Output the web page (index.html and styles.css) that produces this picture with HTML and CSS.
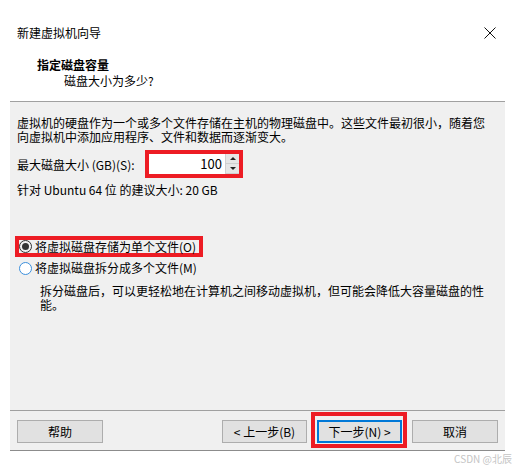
FILE: index.html
```html
<!DOCTYPE html>
<html>

<head>
  <meta charset="utf-8">
  <title>新建虚拟机向导</title>
  <link rel="stylesheet" href="styles.css">
</head>

<body>
  <div class="wizard">
    <div class="titlebar">
      <span class="title">新建虚拟机向导</span>
      <svg class="close" width="12" height="12" viewBox="0 0 12 12">
        <path d="M0.5 0.5 L11.5 11.5 M11.5 0.5 L0.5 11.5" stroke="#111" stroke-width="1" fill="none"/>
      </svg>
    </div>

    <div class="header">
      <div class="heading">指定磁盘容量</div>
      <div class="subheading">磁盘大小为多少?</div>
    </div>

    <div class="panel">
      <div class="content">
        <p class="intro">虚拟机的硬盘作为一个或多个文件存储在主机的物理磁盘中。这些文件最初很小，随着您<br>向虚拟机中添加应用程序、文件和数据而逐渐变大。</p>

        <div class="size-row">
          <span class="size-label">最大磁盘大小 (GB)(S):</span>
          <div class="size-box">
            <div class="size-input">100</div>
            <div class="spinner">
              <span class="spin-btn"><span class="arrow-up"></span></span>
              <span class="spin-btn"><span class="arrow-down"></span></span>
            </div>
          </div>
        </div>

        <p class="hint">针对 Ubuntu 64 位 的建议大小: 20 GB</p>

        <div class="options">
          <div class="option-mark">
            <label class="option"><span class="radio checked"></span>将虚拟磁盘存储为单个文件(O)</label>
          </div>
          <label class="option second"><span class="radio"></span>将虚拟磁盘拆分成多个文件(M)</label>
          <p class="option-note">拆分磁盘后，可以更轻松地在计算机之间移动虚拟机，但可能会降低大容量磁盘的性<br>能。</p>
        </div>
      </div>

      <div class="buttons">
        <button class="btn btn-help">帮助</button>
        <div class="spacer"></div>
        <button class="btn btn-prev">&lt; 上一步(B)</button>
        <button class="btn btn-next">下一步(N) &gt;</button>
        <button class="btn btn-cancel">取消</button>
      </div>
    </div>

    <div class="watermark">CSDN @北辰</div>
  </div>
</body>

</html>
```

FILE: styles.css
```css
* {
  box-sizing: border-box;
  margin: 0;
  padding: 0;
}

body {
  font-family: "Noto Sans CJK SC", "Noto Sans", sans-serif;
  font-size: 12px;
  color: #000000;
  background-color: #ffffff;
}

.wizard {
  width: 517px;
  height: 468px;
  background-color: #ffffff;
}

/* title bar */
.titlebar {
  height: 50px;
  display: flex;
  justify-content: space-between;
  align-items: flex-start;
  padding: 25px 21px 0 17px;
}

.title {
  line-height: 16px;
}

.close {
  margin-top: 2px;
}

/* header */
.header {
  height: 51px;
  padding: 7px 0 0 37px;
}

.heading {
  font-weight: 700;
  line-height: 16px;
}

.subheading {
  line-height: 16px;
  padding-left: 27px;
}

/* main panel */
.panel {
  margin-left: 10px;
  width: 495px;
  background-color: #f0f0f0;
  border-top: 1px solid #a0a0a0;
}

.content {
  height: 308px;
  padding: 14px 7px 0 7px;
}

.intro {
  line-height: 14px;
}

.size-row {
  display: flex;
  align-items: center;
  margin-top: 6px;
  height: 28px;
}

.size-label {
  width: 128px;
}

.size-box {
  display: flex;
  width: 98px;
  height: 28px;
  border: 4px solid #ed1c24;
}

.size-input {
  width: 76px;
  background-color: #ffffff;
  text-align: right;
  padding-right: 3px;
  line-height: 20px;
  font-size: 13px;
}

.spinner {
  width: 14px;
  display: flex;
  flex-direction: column;
  background-color: #f0f0f0;
  border-left: 1px solid #d0d0d0;
}

.spin-btn {
  flex: 1;
  display: flex;
  align-items: center;
  justify-content: center;
  background-color: #e6e6e6;
  border-bottom: 1px solid #cfcfcf;
}

.arrow-up {
  width: 0;
  height: 0;
  border-left: 3px solid transparent;
  border-right: 3px solid transparent;
  border-bottom: 3px solid #222222;
}

.arrow-down {
  width: 0;
  height: 0;
  border-left: 3px solid transparent;
  border-right: 3px solid transparent;
  border-top: 3px solid #222222;
}

.hint {
  margin-top: 5px;
  line-height: 14px;
}

/* radio options */
.options {
  margin-top: 39px;
}

.option-mark {
  display: inline-block;
  margin-left: -2px;
  height: 21px;
  border: 4px solid #ed1c24;
  padding-right: 3px;
}

.option {
  display: flex;
  align-items: center;
  line-height: 13px;
}

.option.second {
  margin-top: 3px;
  margin-left: 2px;
  line-height: 16px;
}

.radio {
  width: 13px;
  height: 13px;
  border-radius: 50%;
  border: 1px solid #3b8fdc;
  background-color: #ffffff;
  margin-right: 3px;
  display: flex;
  align-items: center;
  justify-content: center;
}

.radio.checked {
  border-color: #333333;
  background-color: #f0f0f0;
}

.radio.checked::after {
  content: "";
  width: 7px;
  height: 7px;
  border-radius: 50%;
  background-color: #333333;
}

.option-note {
  margin: 8px 0 0 23px;
  line-height: 14px;
}

/* button row */
.buttons {
  display: flex;
  align-items: flex-start;
  height: 41px;
  padding: 9px 7px 0 7px;
  border-top: 1px solid #a0a0a0;
  border-bottom: 1px solid #8c8c8c;
}

.spacer {
  flex: 1;
}

.btn {
  font-family: "Noto Sans CJK SC", "Noto Sans", sans-serif;
  font-size: 12px;
  height: 23px;
  background-color: #e1e1e1;
  border: 1px solid #adadad;
  color: #000000;
}

.btn-help {
  width: 86px;
}

.btn-prev {
  width: 85px;
}

.btn-next {
  width: 85px;
  margin-left: 10px;
  border: 2px solid #0078d7;
  position: relative;
}

.btn-next::after {
  content: "";
  position: absolute;
  top: -10px;
  left: -8px;
  right: -7px;
  bottom: -7px;
  border: 4px solid #ed1c24;
}

.btn-cancel {
  width: 86px;
  margin-left: 10px;
}

.watermark {
  text-align: right;
  padding: 2px 5px 0 0;
  font-size: 10px;
  line-height: 12px;
  color: #c4c4c4;
}
```
